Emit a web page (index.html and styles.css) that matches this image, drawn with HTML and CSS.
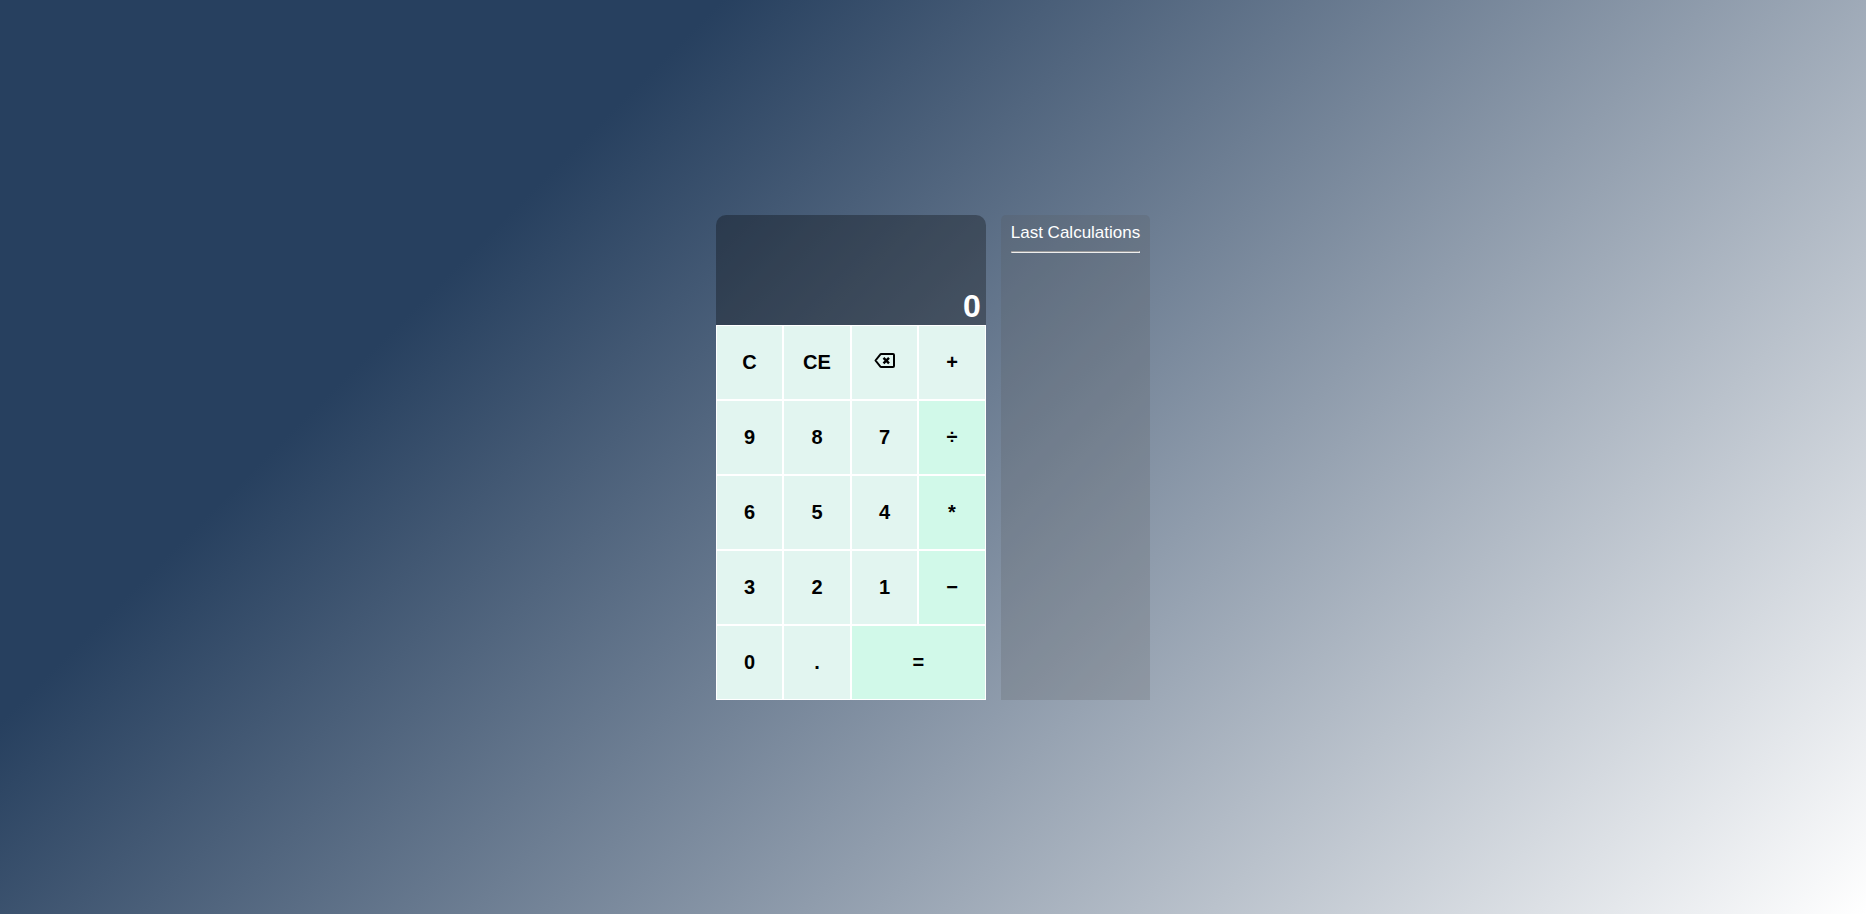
FILE: index.html
```html
<!DOCTYPE html>
<html lang="en">
<head>
<meta charset="utf-8">
<meta name="viewport" content="width=device-width, initial-scale=1">
<title>Calculator</title>
<link rel="stylesheet" href="styles.css">
</head>
<body>
<main class="app">
  <section class="calculator" aria-label="Calculator">
    <output class="display">0</output>
    <div class="keys">
      <button type="button" class="key">C</button>
      <button type="button" class="key">CE</button>
      <button type="button" class="key" aria-label="Backspace">
        <svg class="icon" viewBox="0 0 22 18" fill="none" stroke="currentColor" stroke-width="2" stroke-linejoin="round" aria-hidden="true"><path d="M7.500 1H19Q20 1 20 2V13Q20 14 19 14H7.500Q6.500 14 6 13.200L1.500 7.500L6 1.800Q6.500 1 7.500 1Z"/><path stroke-width="2.400" d="M9.500 4.800L15 10.300M15 4.800L9.500 10.300"/></svg>
      </button>
      <button type="button" class="key">+</button>
      <button type="button" class="key">9</button>
      <button type="button" class="key">8</button>
      <button type="button" class="key">7</button>
      <button type="button" class="key key-operator">÷</button>
      <button type="button" class="key">6</button>
      <button type="button" class="key">5</button>
      <button type="button" class="key">4</button>
      <button type="button" class="key key-operator">*</button>
      <button type="button" class="key">3</button>
      <button type="button" class="key">2</button>
      <button type="button" class="key">1</button>
      <button type="button" class="key key-operator">−</button>
      <button type="button" class="key">0</button>
      <button type="button" class="key">.</button>
      <button type="button" class="key key-operator key-wide">=</button>
    </div>
  </section>
  <aside class="history">
    <h2 class="history-title">Last Calculations</h2>
    <hr class="history-rule">
  </aside>
</main>
</body>
</html>
```
FILE: styles.css
```css
* {
  box-sizing: border-box;
}

body {
  margin: 0;
  font-family: "Liberation Sans", Arial, sans-serif;
  background: linear-gradient(135deg, #27405f 26%, #ffffff 100%);
}

.app {
  display: flex;
  justify-content: center;
  align-items: center;
  gap: 15px;
  min-height: 100vh;
}

.calculator,
.history {
  display: flex;
  flex-direction: column;
  min-height: 485px;
}

.calculator {
  width: 270px;
}

.display {
  display: flex;
  justify-content: flex-end;
  align-items: flex-end;
  height: 110px;
  padding: 0 5px;
  border-radius: 10px 10px 0 0;
  background: rgba(0, 0, 0, 0.3);
  color: #fff;
  font-size: 32px;
  font-weight: 700;
  line-height: 38px;
}

.keys {
  display: grid;
  grid-template-columns: repeat(4, 1fr);
  grid-auto-rows: 75px;
}

.key {
  display: flex;
  justify-content: center;
  align-items: center;
  padding: 0;
  border: 1px solid #fff;
  background: #e2f5f0;
  color: #000;
  font: 700 20px "Liberation Sans", Arial, sans-serif;
  cursor: pointer;
}

.key-operator {
  background: #d1f9e9;
}

.key-wide {
  grid-column: span 2;
}

.icon {
  width: 22px;
  height: 18px;
}

.history {
  padding: 5px 10px;
  border-radius: 5px 5px 0 0;
  background: rgba(85, 85, 85, 0.2);
}

.history-title {
  margin: 0;
  color: #fff;
  font-size: 17px;
  font-weight: 400;
  line-height: 26px;
}

.history-rule {
  width: 100%;
  margin: 5px 0 0;
  border: 1px solid;
  border-color: #9a9a9a #eee #eee #9a9a9a;
}
```
